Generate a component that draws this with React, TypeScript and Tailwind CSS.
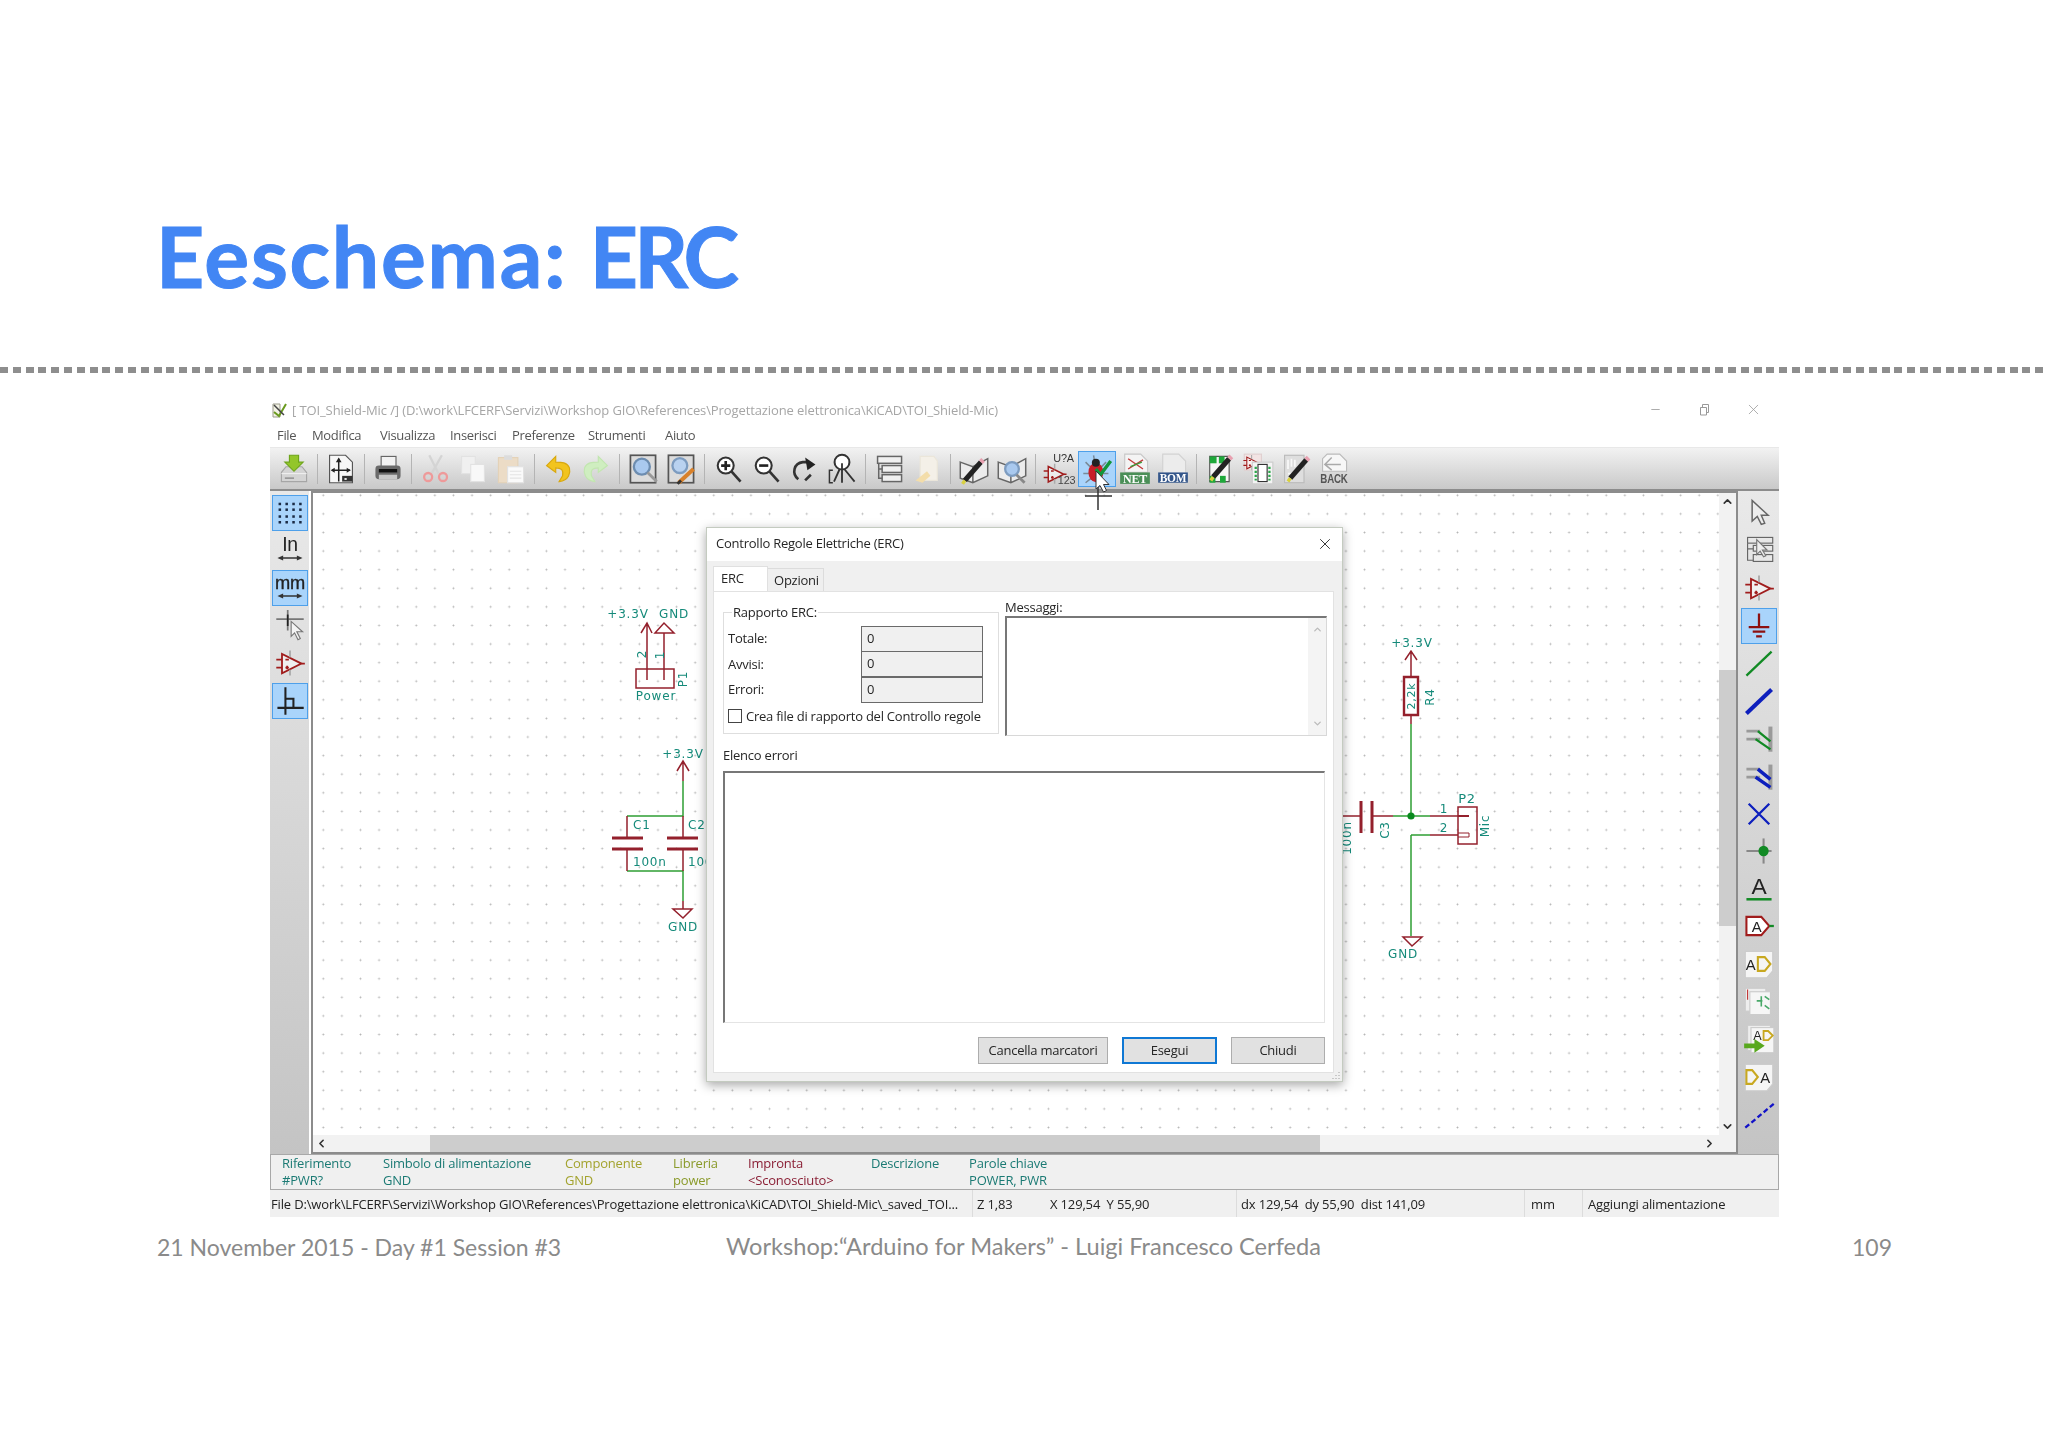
import React from "react";
import { ChevronUp, ChevronDown, ChevronLeft, ChevronRight, X as XIcon, Minus } from "lucide-react";

type P = { children: React.ReactNode; s?: number };
const I = ({ children, s = 32 }: P) => (
  <svg width={s} height={s} viewBox="0 0 28 28" className="block shrink-0">{children}</svg>
);
const Page = ({ f = "#f5f5f5", st = "#bdbdbd" }: { f?: string; st?: string }) => (
  <path d="M4 2H18L24 8V26H4Z" fill={f} stroke={st} />
);
const Pencil = ({ x = 0, y = 0 }: { x?: number; y?: number }) => (
  <g transform={`translate(${x} ${y})`}>
    <path d="M8 22L22 6" stroke="#222" strokeWidth="4.5" />
    <path d="M22 6L24 4" stroke="#e8a0b0" strokeWidth="4.5" />
    <path d="M8 22L6 25" stroke="#d8d040" strokeWidth="3" />
  </g>
);
const OpAmp = ({ c = "#a01c1c", x = 0, y = 0, k = 1 }: { c?: string; x?: number; y?: number; k?: number }) => (
  <g transform={`translate(${x} ${y}) scale(${k})`} fill="none" stroke={c} strokeWidth="1.6">
    <path d="M7 6V23L24 14.5Z" fill="#fff" fillOpacity=".5" />
    <path d="M2 11H7M2 18H7M24 14.5H27M10 11H13M10 18H13M11.5 16.5V19.5" />
    <path d="M14 3V9M14 20V25" stroke="#aaa" />
  </g>
);
const Book = () => (
  <path d="M2 8L13 12L26 5V20L13 26L2 22Z M13 12V26" fill="#ececec" stroke="#666" strokeWidth="1.3" />
);

const Load = () => (<I><path d="M3 17L7 12H21L25 17V25H3Z" fill="#d4d4d4" stroke="#a6a6a6" /><path d="M3 18H25" stroke="#eee" /><path d="M6 22H14" stroke="#999" strokeWidth="1.5" /><path d="M10 2H18V8H22L14 16L6 8H10Z" fill="#93c62a" stroke="#6ea51a" /></I>);
const PageSet = () => (<I><Page f="#f7f7f7" st="#555" /><path d="M12 5V25M6 15H22" stroke="#222" strokeWidth="1.3" /><path d="M12 4L9.5 8H14.5ZM5 15L8.5 12.8V17.200ZM22.500 15L19 12.8V17.200Z" fill="#222" /><rect x="15" y="20" width="9" height="5" fill="#333" /><rect x="17" y="22" width="2" height="1.500" fill="#fff" /></I>);
const Printer = () => (<I><rect x="8" y="3" width="13" height="9" fill="#f2f2f2" stroke="#666" /><rect x="3" y="11" width="22" height="12" rx="3" fill="#6a6a6a" /><rect x="6" y="14" width="16" height="3" fill="#111" /><rect x="6" y="19" width="16" height="4" fill="#c8c8c8" /></I>);
const Cut = () => (<I><path d="M9 2L17 18M20 2L11 18" stroke="#d4d4d4" strokeWidth="2" /><circle cx="8" cy="21" r="3.500" fill="none" stroke="#ee9a9a" strokeWidth="2" /><circle cx="21" cy="21" r="3.500" fill="none" stroke="#ee9a9a" strokeWidth="2" /></I>);
const Copy = () => (<I><rect x="4" y="3" width="12" height="15" fill="#f0f0f0" stroke="#e2e2e2" /><rect x="12" y="10" width="12" height="15" fill="#f8f8f8" stroke="#e2e2e2" /></I>);
const Paste = () => (<I><rect x="3" y="4" width="17" height="22" fill="#ecdcc6" stroke="#e4d2b8" /><rect x="8" y="2" width="7" height="4" fill="#dcdcdc" /><rect x="11" y="12" width="14" height="14" fill="#fafafa" stroke="#e2e2e2" /><path d="M13 16H23M13 19H23M13 22H23" stroke="#e4e4e4" /></I>);
const Undo = () => (<I><path d="M12 3L4 11L12 17V13C17 13 19 15 18 20L15 25C24 24 25 17 24 13C22 8 17 8 12 8Z" fill="#f2c41e" stroke="#d9a80f" /></I>);
const Redo = () => (<I><path d="M16 3L24 11L16 17V13C11 13 9 15 10 20L13 25C4 24 3 17 4 13C6 8 11 8 16 8Z" fill="#cfeec0" stroke="#c2e6b0" /></I>);
const Find = () => (<I><rect x="3" y="2" width="22" height="24" fill="#dcdcdc" stroke="#555" strokeWidth="1.500" /><circle cx="13" cy="12" r="7" fill="#a9c9ef" stroke="#6d8db0" strokeWidth="2" /><path d="M18 17L26 25" stroke="#999" strokeWidth="2.500" /></I>);
const FindEdit = () => (<I><rect x="3" y="2" width="22" height="24" fill="#dcdcdc" stroke="#555" strokeWidth="1.500" /><circle cx="13" cy="11" r="6.500" fill="#b9d2f0" stroke="#7d9cc0" strokeWidth="2" /><path d="M25 14L12 26" stroke="#d9812a" strokeWidth="3.500" /><path d="M14 24L11 27" stroke="#333" strokeWidth="2.500" /></I>);
const ZoomG = ({ children }: { children?: React.ReactNode }) => (<I><circle cx="12" cy="11" r="7" fill="#fff" stroke="#333" strokeWidth="1.800" /><path d="M17 16L25 25" stroke="#333" strokeWidth="2.300" />{children}</I>);
const ZoomIn = () => <ZoomG><path d="M8 11H16M12 7V15" stroke="#222" strokeWidth="2.300" /></ZoomG>;
const ZoomOut = () => <ZoomG><path d="M8 11H16" stroke="#222" strokeWidth="2.300" /></ZoomG>;
const Refresh = () => (<I><path d="M9 23C3 18 5 9 13 8L17 8" fill="none" stroke="#333" strokeWidth="2.300" /><path d="M15 4L24 10L17 15Z" fill="#222" /><path d="M20 19L15 24" stroke="#333" strokeWidth="2.300" /></I>);
const ZoomFit = () => (<I><circle cx="14" cy="8" r="6.500" fill="#fff" stroke="#333" strokeWidth="1.800" /><path d="M12 14L7 25M16 14L25 25M14 9V26" stroke="#333" strokeWidth="1.600" /><path d="M6 15H3V26H6" fill="none" stroke="#333" strokeWidth="1.300" /></I>);
const Tree = () => (<I><rect x="4" y="3" width="21" height="6" fill="#f0f0f0" stroke="#666" strokeWidth="1.300" /><rect x="8" y="11" width="17" height="6" fill="#f0f0f0" stroke="#666" strokeWidth="1.300" /><rect x="8" y="19" width="17" height="6" fill="#f0f0f0" stroke="#666" strokeWidth="1.300" /><path d="M5 9V22H8M5 14H8" fill="none" stroke="#666" strokeWidth="1.300" /></I>);
const Leave = () => (<I><path d="M8 3H20L23 7V24H8Z" fill="#f4f0e8" stroke="#ebe6da" /><path d="M4 24L14 16L17 20L10 26Z" fill="#f3ddaa" /></I>);
const BookEdit = () => (<I><Book /><Pencil x={-2} y={2} /></I>);
const BookFind = () => (<I><Book /><circle cx="14" cy="14" r="6" fill="#a9c9ef" stroke="#7d9cc0" strokeWidth="2" /><path d="M18 19L25 26" stroke="#888" strokeWidth="2.500" /></I>);
const Annot = () => (<I><OpAmp x={-1} y={7} k={0.8} /><text x="9" y="8" fontSize="9.500" fill="#333" className="font-['Liberation_Sans',sans-serif]">U?A</text><text x="13" y="27.500" fontSize="9.500" fill="#444" className="font-['Liberation_Sans',sans-serif]">123</text></I>);
const Bug = () => (<I><path d="M4 8L9 13M22 8L17 13M2 18H8M24 18H18M4 26L9 22M22 26L17 22M11 2L12 8" stroke="#7a8a98" strokeWidth="1.300" /><ellipse cx="13" cy="17" rx="6.500" ry="8.500" fill="#c81f28" /><circle cx="13" cy="8.500" r="3.500" fill="#222" /><path d="M13 14L17 19L26 7" fill="none" stroke="#12963a" strokeWidth="3" /></I>);
const Net = () => (<I><path d="M5 1H19L25 7V17H5Z" fill="#f4f4f4" stroke="#c8c8c8" /><path d="M8 5L21 14M8 14L21 6" stroke="#c23a3a" strokeWidth="1.200" /><path d="M10 12L20 8" stroke="#3a9a3a" strokeWidth="1.200" /><rect x="1" y="17" width="26" height="10" fill="#4a8f57" /><text x="14" y="26" textAnchor="middle" fontSize="10.500" fontWeight="700" fill="#fff" className="font-['Liberation_Serif',serif]">NET</text></I>);
const Bom = () => (<I><path d="M5 1H19L25 7V18H5Z" fill="#ececec" stroke="#d2d2d2" /><rect x="1" y="17" width="26" height="9" fill="#33558a" /><text x="14" y="25" textAnchor="middle" fontSize="10" fontWeight="700" fill="#fff" className="font-['Liberation_Serif',serif]">BOM</text></I>);
const Pcb = () => (<I><path d="M5 3H22V25H5Z" fill="#f6f6f6" stroke="#555" /><rect x="5" y="3" width="6" height="6" fill="#1ea83a" /><rect x="13" y="3" width="5" height="6" fill="#1ea83a" /><rect x="5" y="20" width="5" height="6" fill="#1ea83a" /><rect x="14" y="20" width="5" height="6" fill="#1ea83a" /><Pencil x={0} y={-1} /></I>);
const SchPcb = () => (<I><rect x="2" y="1" width="15" height="14" fill="#f2e4e4" stroke="#e0d0d0" /><OpAmp x={0} y={0} k={0.6} /><rect x="9" y="8" width="18" height="19" fill="#f4f4f4" stroke="#ccc" /><rect x="14" y="10" width="8" height="15" fill="#fff" stroke="#333" /><path d="M12 12V24M24 12V24" stroke="#2aa84a" strokeWidth="2" strokeDasharray="2 1.500" /></I>);
const EditDoc = () => (<I><rect x="4" y="2" width="17" height="24" fill="#dedede" stroke="#bbb" /><path d="M7 6V14M10 5V12M13 6V12M7 18H12" stroke="#f8f8f8" strokeWidth="1.500" /><Pencil x={1} y={0} /></I>);
const Back = () => (<I><path d="M8 1H19L25 7V16H4V5Z" fill="#f7f7f7" stroke="#bbb" /><path d="M12 4L6 10L12 15M6 10H20" fill="none" stroke="#aaa" strokeWidth="1.300" /><text x="14" y="26.500" textAnchor="middle" fontSize="11" fontWeight="700" fill="#555" className="font-['Liberation_Sans',sans-serif]" textLength="24" lengthAdjust="spacingAndGlyphs">BACK</text></I>);

const GridI = () => (<I>{[6, 11, 17, 22].map((y) => [5, 11, 17, 23].map((x) => <rect key={`${x}-${y}`} x={x - 1} y={y - 1} width="2.200" height="2.200" fill="#1b2b45" />))}</I>);
const Arrow2 = ({ y }: { y: number }) => (<path d={`M3 ${y}L8 ${y - 2.200}V${y - 0.7}H20V${y - 2.200}L25 ${y}L20 ${y + 2.200}V${y + 0.7}H8V${y + 2.200}Z`} fill="#333" />);
const InI = () => (<I><text x="14" y="15" textAnchor="middle" fontSize="17" fill="#222" className="font-['Liberation_Sans',sans-serif]">In</text><Arrow2 y={21} /></I>);
const MmI = () => (<I><text x="14" y="15" textAnchor="middle" fontSize="16" stroke="#222" strokeWidth="0.3" fill="#222" className="font-['Liberation_Sans',sans-serif]">mm</text><Arrow2 y={21} /></I>);
const Cross = () => (<I><path d="M2 8H26M12 0V18" stroke="#777" strokeWidth="1.500" /><path d="M12 4V14" stroke="#222" strokeWidth="1.500" /><path d="M15 10V23L18 20L21 26L23 25L20 19H25Z" fill="#f4f4f4" stroke="#777" /></I>);
const Ortho = () => (<I><path d="M10 2V26M3 20H26" stroke="#222" strokeWidth="1.800" /><path d="M10 12H17V20" fill="none" stroke="#222" strokeWidth="1.800" /></I>);

const Sel = () => (<I><path d="M8 3V21L12.500 17L16 24L19 23L16 16H22Z" fill="#ededed" stroke="#666" strokeWidth="1.300" /></I>);
const Hier = () => (<I><rect x="4" y="3" width="22" height="5" fill="#e8e8e8" stroke="#666" /><rect x="9" y="10" width="17" height="5" fill="#e8e8e8" stroke="#666" /><rect x="9" y="18" width="17" height="6" fill="#e8e8e8" stroke="#666" /><path d="M4 8V23H9M4 13H9" fill="none" stroke="#666" /><path d="M12 5V18L15 15L18 20L20 19L17 14H21Z" fill="#eee" stroke="#777" /></I>);
const Gnd = () => (<I><path d="M14 3V15M5 15H23M8.500 19H19.500M11.500 23H16.500" stroke="#8d1010" strokeWidth="2" /></I>);
const Wire = () => (<I><path d="M3 25L25 4" stroke="#118a24" strokeWidth="2" /></I>);
const Bus = () => (<I><path d="M3 25L25 4" stroke="#0d1fbd" strokeWidth="3.600" /></I>);
const Entry = ({ c, w }: { c: string; w: number }) => (<I><path d="M3 8H15M3 15H15" stroke="#9a9a9a" strokeWidth="2.500" /><path d="M24 4V26" stroke="#9a9a9a" strokeWidth="3.500" /><path d="M13 8L24 17M11 15L24 24" stroke={c} strokeWidth={w} /></I>);
const NoConn = () => (<I><path d="M5 5L23 23M23 5L5 23" stroke="#0d1fbd" strokeWidth="2" /></I>);
const Junct = () => (<I><path d="M3 14H25" stroke="#888" strokeWidth="1.800" /><path d="M18 3V25" stroke="#888" strokeWidth="1.800" /><circle cx="18" cy="14" r="4.500" fill="#118a24" /></I>);
const TextA = () => (<I><text x="14" y="18" textAnchor="middle" fontSize="20" fill="#222" className="font-['Liberation_Sans',sans-serif]">A</text><path d="M3 23H25" stroke="#118a24" strokeWidth="2.200" /></I>);
const LabelA = () => (<I><path d="M3 6H16L23 14L16 22H3Z" fill="#fff" stroke="#a01c1c" strokeWidth="1.800" /><path d="M23 14H27" stroke="#118a24" strokeWidth="2" /><text x="12" y="19" textAnchor="middle" fontSize="13" fill="#222" className="font-['Liberation_Sans',sans-serif]">A</text></I>);
const Sheet = ({ children }: P) => (<I><path d="M2 3H26V20L21 26H2Z" fill="#f5f5f5" stroke="#ccc" />{children}</I>);
const Hl = () => (<Sheet><text x="2.500" y="19" fontSize="13" fill="#222" className="font-['Liberation_Sans',sans-serif]">A</text><path d="M13 8H19L24 14L19 20H13Z" fill="none" stroke="#c8a820" strokeWidth="1.800" /></Sheet>);
const SubS = () => (<I><rect x="2" y="2" width="18" height="20" fill="#eee" stroke="#ccc" /><rect x="6" y="5" width="18" height="20" fill="#f6f6f6" stroke="#ccc" /><path d="M4 3V12" stroke="#c23a3a" /><path d="M12 13H17M16 9V18M19 9L23 12M19 17L23 20" stroke="#48a868" strokeWidth="1.400" /></I>);
const Import = () => (<I><rect x="4" y="2" width="20" height="22" fill="#eee" stroke="#ccc" /><rect x="7" y="4" width="20" height="22" fill="#f6f6f6" stroke="#ccc" /><text x="9" y="15" fontSize="11" fill="#222" className="font-['Liberation_Sans',sans-serif]">A</text><path d="M18 7H22L26 11L22 15H18Z" fill="none" stroke="#c8a820" strokeWidth="1.600" /><path d="M1 18H10V14L19 20L10 26V22H1Z" fill="#58a81e" /></I>);
const HlR = () => (<Sheet><path d="M3 8H8L13 14L8 20H3Z" fill="none" stroke="#c8a820" strokeWidth="1.800" /><text x="15" y="19" fontSize="13" fill="#222" className="font-['Liberation_Sans',sans-serif]">A</text></Sheet>);
const Dash = () => (<I><path d="M2 26L27 5" stroke="#1212c8" strokeWidth="2" strokeDasharray="4.500 2.500" /></I>);

const topIcons: (React.FC | null)[] = [Load, null, PageSet, null, Printer, null, Cut, Copy, Paste, null, Undo, Redo, null, Find, FindEdit, null, ZoomIn, ZoomOut, Refresh, ZoomFit, null, Tree, Leave, null, BookEdit, BookFind, null, Annot, Bug, Net, Bom, null, Pcb, SchPcb, EditDoc, Back];
const leftIcons: [React.FC, boolean][] = [[GridI, true], [InI, false], [MmI, true], [Cross, false], [() => <I><OpAmp /></I>, false], [Ortho, true]];
const rightIcons: [React.FC, boolean][] = [[Sel, false], [Hier, false], [() => <I><OpAmp /></I>, false], [Gnd, true], [Wire, false], [Bus, false], [() => <Entry c="#118a24" w={2} />, false], [() => <Entry c="#0d1fbd" w={3} />, false], [NoConn, false], [Junct, false], [TextA, false], [LabelA, false], [Hl, false], [SubS, false], [Import, false], [HlR, false], [Dash, false]];

const SideBar = ({ icons, cls }: { icons: [React.FC, boolean][]; cls: string }) => (
  <div className={`flex flex-col items-center pt-[3px] bg-gradient-to-b from-[#e9e9e9] via-[#d6d6d6] to-[#c4c4c4] ${cls}`}>
    {icons.map(([C, on], i) => (
      <div key={i} className="h-[37.600px] w-full flex items-center justify-center">
        <div className={`w-[36px] h-[36px] flex items-center justify-center border ${on ? "bg-[#a9d4fb] border-[#4ea0ea]" : "border-transparent"}`}><C /></div>
      </div>
    ))}
  </div>
);

const teal = "#158a7a";
const red = "#94202c";
const green = "#2f9e35";
const T = ({ x, y, a = "middle", r, children, s = 12 }: { x: number; y: number; a?: "start" | "middle"; r?: boolean; children: string; s?: number }) => (
  <text x={x} y={y} fontSize={s} fill={teal} textAnchor={a} dominantBaseline="central" letterSpacing="0.8" transform={r ? `rotate(-90 ${x} ${y})` : undefined} className="font-['DejaVu_Sans',sans-serif]">{children}</text>
);
const L = ({ d, c = red, w = 1.5 }: { d: string; c?: string; w?: number }) => <path d={d} fill="none" stroke={c} strokeWidth={w} />;

const Schematic = () => (
  <svg viewBox="313 492 1406 641" width="1406" height="641" className="absolute left-0 top-0">
    {/* Power connector */}
    <T x={628} y={613}>+3.3V</T><T x={674} y={613}>GND</T>
    <L d="M641 632L647 622L652 632M647 622V679M664 632V679" />
    <L d="M655 632H674L664 622Z" />
    <L d="M636 668H674V687H636Z" />
    <T x={642} y={653} r>2</T><T x={660} y={654} r>1</T><T x={683} y={678} r>P1</T>
    <T x={656} y={695}>Power</T>
    {/* Caps */}
    <T x={683} y={753}>+3.3V</T>
    <L d="M677 770L683 760L689 770M683 760V780" />
    <L d="M683 780V815H627M627 870H683V900" c={green} />
    <L d="M627 815V837M683 815V837M627 848V870M683 848V870M683 900V908" />
    <L d="M612 837H643M612 848H643M667 837H698M667 848H698" w={2.8} />
    <L d="M673 908H692L683 917Z" />
    <T x={633} y={824} a="start">C1</T><T x={688} y={824} a="start">C2</T>
    <T x={633} y={861} a="start">100n</T><T x={688} y={861} a="start">100n</T>
    <T x={683} y={926}>GND</T>
    {/* Mic */}
    <T x={1412} y={642}>+3.3V</T>
    <L d="M1405 659L1411 650L1417 659M1411 650V676M1411 714V723" />
    <L d="M1404 676H1418V714H1404Z" w={2.4} />
    <T x={1411} y={695} r s={11}>2,2k</T><T x={1430} y={696} r>R4</T>
    <L d="M1411 723V815M1393 815H1430M1411 834V935M1411 834H1430" c={green} />
    <circle cx="1411" cy="815" r="3.600" fill="#0a8a1e" />
    <L d="M1343 815H1361M1372 815H1393M1430 815H1458M1430 834H1458" />
    <L d="M1361 800V832M1372 800V832" w={3} />
    <L d="M1458 815H1469" w={2} />
    <L d="M1458 832H1469V836H1458" w={1} />
    <L d="M1458 806H1477V843H1458Z" />
    <L d="M1403 936H1422L1412 945Z" />
    <T x={1347} y={837} r>100n</T><T x={1385} y={829} r>C3</T>
    <T x={1467} y={797} s={13}>P2</T><T x={1485} y={825} r>Mic</T>
    <T x={1444} y={808}>1</T><T x={1444} y={827}>2</T>
    <T x={1403} y={953}>GND</T>
  </svg>
);

const Dialog = () => (
  <div className="absolute left-[393px] top-[34px] w-[637px] h-[555px] bg-[#f0f0f0] border border-[#c4cbc0] shadow-[0_3px_10px_rgba(0,0,0,0.35)] flex flex-col text-[#262626] tracking-[-0.018em]">
    <div className="h-[33px] bg-white flex items-center justify-between pl-[9px] pr-[8px] pb-[2px] shrink-0">
      <span>Controllo Regole Elettriche (ERC)</span>
      <XIcon size={18} strokeWidth={1.300} color="#333" />
    </div>
    <div className="h-[30px] pl-[6px] flex items-end shrink-0">
      <div className="w-[55px] h-[25px] bg-white pl-[7px] leading-[22px] border-t border-l border-r border-[#e0e0e0]">ERC</div>
      <div className="w-[56px] h-[23px] bg-[#efefef] pl-[6px] leading-[23px] border-t border-r border-[#dcdcdc]">Opzioni</div>
    </div>
    <div className="w-[621px] h-[482px] ml-[6px] bg-white border border-[#e2e2e2] pl-[9px] pt-[8px] flex flex-col relative">
      <div className="flex gap-[6px] h-[137px]">
        <div className="w-[276px] pt-[12px]">
          <div className="relative h-[122px] border border-[#dedede] pt-[13px]">
            <span className="absolute left-[8px] -top-[9px] bg-white px-[1px] leading-[16px]">Rapporto ERC:</span>
            {["Totale:", "Avvisi:", "Errori:"].map((l) => (
              <div key={l} className="flex items-center h-[25.500px]">
                <span className="w-[137px] pl-[4px]">{l}</span>
                <span className="w-[122px] h-[26px] bg-[#f0f0f0] border border-[#6a6a6a] pl-[5px] leading-[23px]">0</span>
              </div>
            ))}
            <div className="flex items-center mt-[4px] pl-[4px] gap-[4px]">
              <span className="w-[14px] h-[14px] border border-[#444] bg-white" />
              <span className="whitespace-nowrap">Crea file di rapporto del Controllo regole</span>
            </div>
          </div>
        </div>
        <div className="w-[322px]">
          <div className="h-[16px] leading-[14px]">Messaggi:</div>
          <div className="h-[120px] border border-[#d8d8d8] border-t-2 border-t-[#777] border-l-2 border-l-[#777] flex justify-end">
            <div className="w-[18px] bg-[#f4f4f4] flex flex-col justify-between items-center py-[6px]">
              <ChevronUp size={11} color="#bbb" strokeWidth={3} />
              <ChevronDown size={11} color="#bbb" strokeWidth={3} />
            </div>
          </div>
        </div>
      </div>
      <div className="mt-[9px] h-[18px] leading-[18px]">Elenco errori</div>
      <div className="w-[602px] h-[252px] mt-[7px] border border-[#e4e4e4] border-t-2 border-t-[#777] border-l-2 border-l-[#777]" />
      <div className="w-[602px] flex justify-end gap-[14px] mt-[14px]">
        <div className="w-[130px] h-[27px] bg-[#e1e1e1] border border-[#adadad] flex items-center justify-center">Cancella marcatori</div>
        <div className="w-[95px] h-[27px] bg-[#e1e1e1] border-2 border-[#0f78d4] flex items-center justify-center">Esegui</div>
        <div className="w-[94px] h-[27px] bg-[#e1e1e1] border border-[#adadad] flex items-center justify-center">Chiudi</div>
      </div>
    </div>
    <svg width="9" height="9" viewBox="0 0 9 9" className="absolute right-[1px] bottom-[1px]"><path d="M7 1V2M4 4V5M7 4V5M1 7V8M4 7V8M7 7V8" stroke="#bbb" strokeWidth="1.500" /></svg>
  </div>
);

const Msg = ({ w, a, b, c }: { w: string; a: string; b: string; c: string }) => (
  <div className={`${w} ${c} leading-[17px] whitespace-nowrap shrink-0`}><div>{a}</div><div className="h-[17px]">{b}</div></div>
);

export default function App() {
  return (
    <div className="w-[2048px] h-[1447px] bg-white overflow-hidden flex flex-col">
      <h1 className="h-[367px] pl-[156px] pt-[198px] text-[84px] leading-[116px] font-bold text-[#4286f4] font-['Lato',sans-serif] tracking-[0.021em] [-webkit-text-stroke:1px_#4286f4] whitespace-nowrap shrink-0">Eeschema: <span className="tracking-[-0.045em]">ERC</span></h1>
      <div className="h-[6px] shrink-0 bg-[repeating-linear-gradient(90deg,#8e8e8e_0,#8e8e8e_8px,transparent_8px,transparent_12.800px)]" />
      <div className="ml-[270px] mt-[22px] w-[1509px] h-[821px] shrink-0 flex flex-col bg-white blur-[0.7px] text-[13px] tracking-[-0.015em] font-['Open_Sans',sans-serif] text-[#333]">
        <div className="h-[28px] flex items-center shrink-0 relative pt-[3px]">
          <svg width="17" height="17" viewBox="0 0 17 17" className="ml-[1px] mr-[4px] shrink-0"><path d="M2 2H9V15H2Z" fill="#f2f2e4" stroke="#9a9a8a" /><path d="M3 10L8 14L15 2" fill="none" stroke="#6a9a1e" strokeWidth="2" /><path d="M3 3L13 13" stroke="#444" strokeWidth="1.500" /></svg>
          <span className="text-[#a6a6a6] whitespace-nowrap tracking-[-0.008em]">{"[ TOI_Shield-Mic /] (D:\\work\\LFCERF\\Servizi\\Workshop GIO\\References\\Progettazione elettronica\\KiCAD\\TOI_Shield-Mic)"}</span>
          <div className="ml-auto flex items-center text-[#999] shrink-0 -mt-[3px]">
            <Minus size={13} strokeWidth={1.500} className="mr-[2px]" />
            <svg width="13" height="13" viewBox="0 0 13 13" className="ml-[34px]"><path d="M2.500 4.500H8.500V12H2.500ZM4.500 4.500V1.500H10.500V9.500H8.500" fill="none" stroke="#999" /></svg>
            <XIcon size={17} strokeWidth={1.100} color="#999" className="ml-[34px] mr-[17px]" />
          </div>
        </div>
        <div className="h-[24px] flex items-center shrink-0 pl-[7px] pt-[2px] text-[#555] tracking-[-0.025em]">
          <span className="w-[35px]">File</span>
          <span className="w-[68px]">Modifica</span>
          <span className="w-[70px]">Visualizza</span>
          <span className="w-[62px]">Inserisci</span>
          <span className="w-[76px]">Preferenze</span>
          <span className="w-[77px]">Strumenti</span>
          <span>Aiuto</span>
        </div>
        <div className="h-[44px] shrink-0 flex items-center pl-[5px] border-t border-[#e8e8e8] border-b-2 border-b-[#8c8c8c] bg-gradient-to-b from-[#f2f2f2] to-[#c9c9c9] relative">
          {topIcons.map((C, i) =>
            C ? (
              <div key={i} className={`w-[38px] h-[36px] flex items-center justify-center shrink-0 ${C === Bug ? "bg-[#a9d4fb] border border-[#4ea0ea]" : ""}`}><C /></div>
            ) : (
              <div key={i} className="w-[9px] h-[30px] flex justify-center shrink-0"><div className="w-px h-full bg-[#b4b4b4]" /></div>
            )
          )}
          <svg width="34" height="42" viewBox="0 0 34 42" className="absolute left-[814px] top-[22px] z-10">
            <path d="M14 16V40M1 26H28" stroke="#333" strokeWidth="1.500" />
            <path d="M12 1V19L16 15.500L19.500 22L22.500 20.500L19.500 14.500H25Z" fill="#fff" stroke="#333" />
          </svg>
        </div>
        <div className="h-[663px] shrink-0 flex">
          <SideBar icons={leftIcons} cls="w-[39px] shrink-0 mr-[2px]" />
          <div className="w-[1427px] shrink-0 flex flex-col border-2 border-[#8c8c8c]">
            <div className="flex h-[642px] shrink-0">
              <div className="relative w-[1406px] shrink-0 bg-white bg-[radial-gradient(circle,#b4b4b4_0.700px,transparent_1.200px)] bg-[size:18.600px_18.600px] bg-[position:1px_-7px]">
                <Schematic />
                <Dialog />
              </div>
              <div className="w-[17px] shrink-0 ml-auto bg-[#f2f2f2] flex flex-col items-center pt-[2px] pb-[2px] relative">
                <ChevronUp size={13} strokeWidth={3} color="#333" />
                <div className="w-full h-[256px] bg-[#cdcdcd] mt-[162px]" />
                <ChevronDown size={13} strokeWidth={3} color="#333" className="mt-auto" />
              </div>
            </div>
            <div className="h-[17px] shrink-0 bg-[#f2f2f2] flex items-center">
              <ChevronLeft size={13} strokeWidth={3} color="#333" className="ml-[2px]" />
              <div className="h-full w-[890px] bg-[#cdcdcd] ml-[102px]" />
              <ChevronRight size={13} strokeWidth={3} color="#333" className="ml-auto mr-[20px]" />
            </div>
          </div>
          <SideBar icons={rightIcons} cls="w-[41px] shrink-0" />
        </div>
        <div className="h-[36px] shrink-0 flex items-center pl-[11px] bg-[#f0f0f0] border border-[#a8a8a8]">
          <Msg w="w-[101px]" a="Riferimento" b="#PWR?" c="text-[#1b7a74]" />
          <Msg w="w-[182px]" a="Simbolo di alimentazione" b="GND" c="text-[#1b7a74]" />
          <Msg w="w-[108px]" a="Componente" b="GND" c="text-[#a3a32e]" />
          <Msg w="w-[75px]" a="Libreria" b="power" c="text-[#8a9a2a]" />
          <Msg w="w-[123px]" a="Impronta" b="<Sconosciuto>" c="text-[#8a1f35]" />
          <Msg w="w-[98px]" a="Descrizione" b="" c="text-[#1b7a74]" />
          <Msg w="w-[100px]" a="Parole chiave" b="POWER, PWR" c="text-[#1b7a74]" />
        </div>
        <div className="h-[27px] shrink-0 flex items-center bg-[#f0f0f0] text-[#222] whitespace-pre tracking-[-0.012em]">
          <div className="w-[703px] pl-[1px] pt-[3px] border-r border-[#dcdcdc] h-full flex items-center overflow-hidden">{"File D:\\work\\LFCERF\\Servizi\\Workshop GIO\\References\\Progettazione elettronica\\KiCAD\\TOI_Shield-Mic\\_saved_TOI..."}</div>
          <div className="w-[264px] pl-[4px] pt-[3px] border-r border-[#dcdcdc] h-full flex items-center">
            <span className="w-[73px]">Z 1,83</span><span>{"X 129,54  Y 55,90"}</span>
          </div>
          <div className="w-[288px] pl-[4px] pt-[3px] border-r border-[#dcdcdc] h-full flex items-center">{"dx 129,54  dy 55,90  dist 141,09"}</div>
          <div className="w-[58px] pl-[6px] pt-[3px] border-r border-[#dcdcdc] h-full flex items-center">mm</div>
          <div className="pl-[5px] pt-[3px]">Aggiungi alimentazione</div>
        </div>
      </div>
      <footer className="flex items-center h-[30px] mt-[16px] pl-[157px] text-[23px] text-[#8a8a8a] font-['Lato',sans-serif] whitespace-nowrap shrink-0">
        <span className="w-[569px] shrink-0">21 November 2015 - Day #1 Session #3</span>
        <span className="w-[1126px] shrink-0 text-[23.600px]">{"Workshop:“Arduino for Makers” - Luigi Francesco Cerfeda"}</span>
        <span>109</span>
      </footer>
    </div>
  );
}
